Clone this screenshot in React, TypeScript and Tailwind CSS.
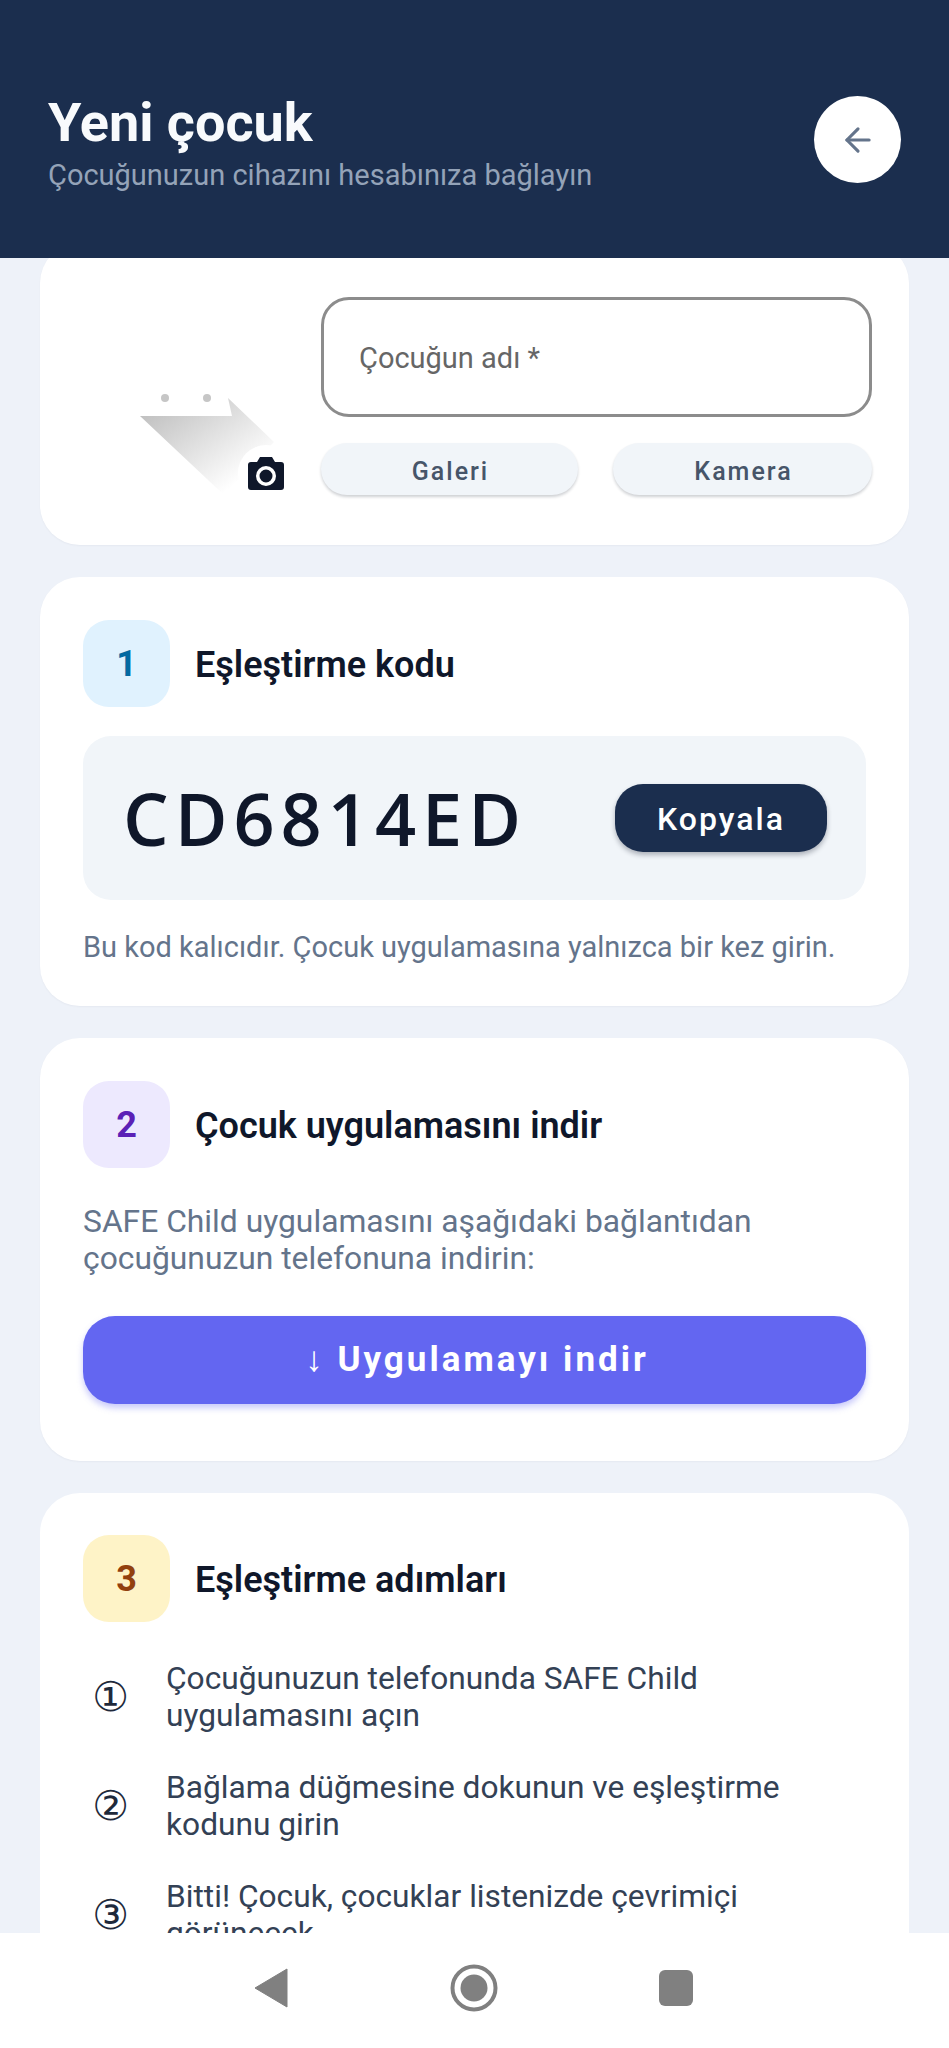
import React from "react";
import { ArrowLeft } from "lucide-react";

function Avatar() {
  return (
    <svg width="180" height="120" viewBox="0 0 180 120" className="shrink-0 self-end">
      <defs>
        <linearGradient id="sh" x1="0" y1="0" x2="1" y2="1">
          <stop offset="0" stopColor="#b8b8b8" />
          <stop offset="0.8" stopColor="#ffffff" />
        </linearGradient>
      </defs>
      <circle cx="44" cy="13" r="4" fill="#c6c6c6" />
      <circle cx="86" cy="13" r="4" fill="#c6c6c6" />
      <polygon points="19,31 111,31 107,13 153,57 103,110" fill="url(#sh)" />
      <circle cx="145" cy="88" r="28" fill="#ffffff" />
      <path
        fillRule="evenodd"
        fill="#0f172a"
        d="M130 77h6l3-5h12l3 5h6a3 3 0 0 1 3 3v22a3 3 0 0 1-3 3h-30a3 3 0 0 1-3-3v-22a3 3 0 0 1 3-3zM145 81a10 10 0 1 0 0 20a10 10 0 1 0 0-20zM145 84.500a6.500 6.500 0 1 1 0 13a6.500 6.500 0 1 1 0-13z"
      />
    </svg>
  );
}

function Badge({ n, bg, fg }: { n: string; bg: string; fg: string }) {
  return (
    <div className={`w-[87px] h-[87px] rounded-[26px] flex items-center justify-center text-[36px] font-bold shrink-0 ${bg} ${fg}`}>
      {n}
    </div>
  );
}

function StepHead({ n, bg, fg, title }: { n: string; bg: string; fg: string; title: string }) {
  return (
    <div className="flex items-center gap-[25px]">
      <Badge n={n} bg={bg} fg={fg} />
      <h2 className="text-[36px] font-semibold text-[#0f172a] leading-[44px] pt-[2px]">{title}</h2>
    </div>
  );
}

function Step({ mark, children }: { mark: string; children: React.ReactNode }) {
  return (
    <div className="flex items-center gap-[37px] h-[72px]">
      <span className="w-[46px] text-right text-[41px] leading-none text-[#1e293b] font-['DejaVu_Sans']">{mark}</span>
      <p className="w-[640px] text-[31.700px] leading-[37px] text-[#334155]">{children}</p>
    </div>
  );
}

export default function App() {
  return (
    <div className="h-[2048px] w-[949px] flex flex-col overflow-hidden bg-[#eef2f9] font-['Roboto',sans-serif]">
      <header className="relative z-10 h-[258px] shrink-0 bg-[#1b2e4e] pl-[48px] pr-[48px] flex items-start justify-between">
        <div className="pt-[92px]">
          <h1 className="text-[54px] leading-[62px] font-bold text-[#f8fafc]">Yeni çocuk</h1>
          <p className="mt-[3px] text-[29px] leading-[36px] text-[#94a3b8]">Çocuğunuzun cihazını hesabınıza bağlayın</p>
        </div>
        <button className="mt-[96px] w-[87px] h-[87px] rounded-full bg-white flex items-center justify-center text-[#64748b]">
          <ArrowLeft size={38} strokeWidth={2} />
        </button>
      </header>

      <main className="flex-1 min-h-0 overflow-hidden px-[40px] -mt-[15px] flex flex-col gap-[32px]">
        <section className="shrink-0 h-[302px] rounded-[40px] bg-white pt-[54px] pl-[81px] pr-[37px] flex items-start gap-[20px] shadow-[0_1px_2px_rgba(15,23,42,0.04)]">
          <div className="h-[208px] flex items-end">
            <Avatar />
          </div>
          <div className="flex-1 min-w-0">
            <div className="h-[120px] rounded-[28px] border-[3px] border-[#8c8c8c] flex items-center pl-[35px] pt-[3px] text-[29px] text-[#666666]">
              Çocuğun adı *
            </div>
            <div className="mt-[26px] flex justify-between">
              <button className="w-[257px] h-[52px] rounded-[26px] bg-[#f1f5f9] pt-[5px] pl-[2px] text-[25px] font-medium tracking-[2px] text-[#475569] shadow-[0_2px_3px_rgba(15,23,42,0.2)]">Galeri</button>
              <button className="w-[259px] h-[52px] rounded-[26px] bg-[#f1f5f9] pt-[5px] pl-[2px] text-[25px] font-medium tracking-[2px] text-[#475569] shadow-[0_2px_3px_rgba(15,23,42,0.2)]">Kamera</button>
            </div>
          </div>
        </section>

        <section className="shrink-0 h-[429px] rounded-[40px] bg-white pt-[43px] px-[43px] shadow-[0_1px_2px_rgba(15,23,42,0.04)]">
          <StepHead n="1" bg="bg-[#e0f2fe]" fg="text-[#0369a1]" title="Eşleştirme kodu" />
          <div className="mt-[29px] h-[164px] rounded-[28px] bg-[#f1f5f9] pl-[40px] pr-[39px] flex items-center justify-between">
            <span className="text-[72px] leading-none font-semibold tracking-[6px] text-[#0f172a] font-['Open_Sans']">CD6814ED</span>
            <button className="w-[212px] h-[68px] rounded-[28px] bg-[#1b2e4e] pt-[2px] text-[32px] font-medium tracking-[2px] text-white shadow-[0_3px_5px_rgba(15,23,42,0.3)]">Kopyala</button>
          </div>
          <p className="mt-[29px] text-[29px] leading-[36px] text-[#64748b]">Bu kod kalıcıdır. Çocuk uygulamasına yalnızca bir kez girin.</p>
        </section>

        <section className="shrink-0 h-[423px] rounded-[40px] bg-white pt-[43px] px-[43px] shadow-[0_1px_2px_rgba(15,23,42,0.04)]">
          <StepHead n="2" bg="bg-[#ede9fe]" fg="text-[#5b21b6]" title="Çocuk uygulamasını indir" />
          <p className="mt-[35px] text-[31.800px] leading-[37px] text-[#64748b]">
            SAFE Child uygulamasını aşağıdaki bağlantıdan
            <br />
            çocuğunuzun telefonuna indirin:
          </p>
          <button className="mt-[39px] w-full h-[88px] rounded-[32px] bg-[#6366f1] pl-[5px] text-[35px] font-bold tracking-[3px] text-white shadow-[0_4px_6px_rgba(99,102,241,0.35)]">
            ↓ Uygulamayı indir
          </button>
        </section>

        <section className="shrink-0 h-[600px] rounded-[40px] bg-white pt-[42px] px-[43px]">
          <StepHead n="3" bg="bg-[#fef3c7]" fg="text-[#92400e]" title="Eşleştirme adımları" />
          <div className="mt-[39px] flex flex-col gap-[37px]">
            <Step mark="①">Çocuğunuzun telefonunda SAFE Child uygulamasını açın</Step>
            <Step mark="②">Bağlama düğmesine dokunun ve eşleştirme kodunu girin</Step>
            <Step mark="③">Bitti! Çocuk, çocuklar listenizde çevrimiçi görünecek</Step>
          </div>
        </section>
      </main>

      <nav className="relative z-10 h-[115px] shrink-0 bg-white flex items-center justify-between pl-[254px] pr-[256px] pb-[6px]">
        <svg width="34" height="40" viewBox="0 0 34 40"><path d="M33 1v38L1 20z" fill="#808080" stroke="#808080" strokeLinejoin="round" /></svg>
        <svg width="48" height="48" viewBox="0 0 48 48"><circle cx="24" cy="24" r="21.500" fill="none" stroke="#808080" strokeWidth="4" /><circle cx="24" cy="24" r="13.500" fill="#808080" /></svg>
        <svg width="34" height="36" viewBox="0 0 34 36"><rect width="34" height="36" rx="6" fill="#808080" /></svg>
      </nav>
    </div>
  );
}
